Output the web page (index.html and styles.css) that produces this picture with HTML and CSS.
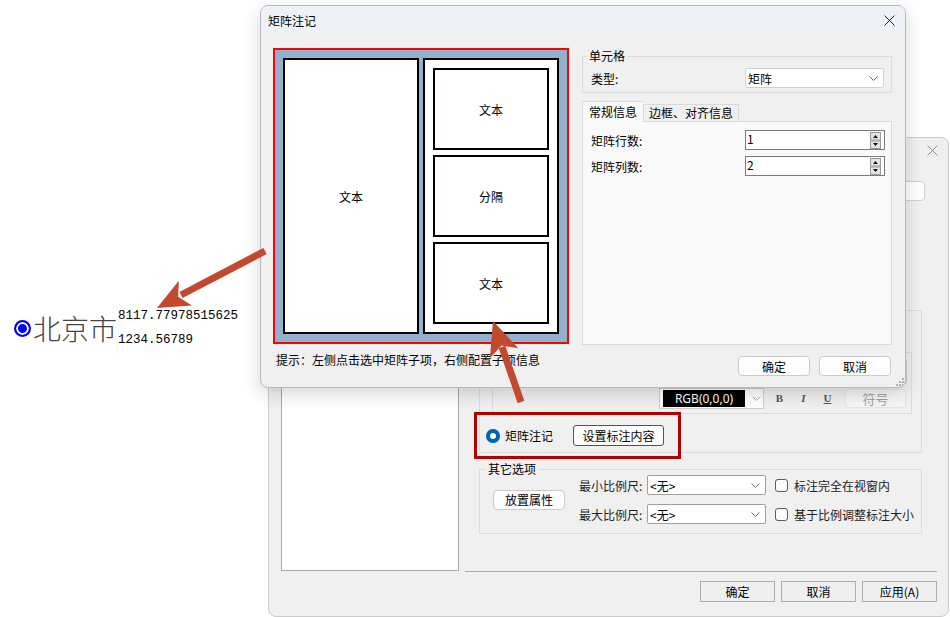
FILE: index.html
```html
<!DOCTYPE html>
<html lang="zh-CN">
<head>
  <meta charset="UTF-8" />
  <title>矩阵注记</title>
  <link rel="stylesheet" href="styles.css">
</head>
<body>
<div class="desk">

  <!-- 地图上的点标注 -->
  <div class="map-label">
    <span class="pin"></span>
    <span class="place">北京市</span>
    <span class="coords"><span>8117.77978515625</span><span>1234.56789</span></span>
  </div>

  <!-- 标注设置窗口（底层） -->
  <div class="dlg dlg-back">
    <div class="dlg-title">
      <span class="dlg-caption"></span>
      <svg class="close" viewBox="0 0 11 11"><path d="M0.5 0.5L10.5 10.5M10.5 0.5L0.5 10.5"/></svg>
    </div>
    <div class="back-body">
      <div class="listbox"></div>
      <div class="pane">
        <div class="name-row"><span class="edit"></span></div>
        <div class="pane-top"></div>

        <div class="box style-box">
          <div class="box text-box">
            <div class="memo"></div>
            <div class="toolbar">
              <span class="color-combo">
                <span class="swatch">RGB(0,0,0)</span>
                <svg class="chev" viewBox="0 0 9 5"><path d="M0.5 0.5L4.5 4.5L8.5 0.5"/></svg>
              </span>
              <span class="fmt fmt-b">B</span>
              <span class="fmt fmt-i">I</span>
              <span class="fmt fmt-u">U</span>
              <button class="btn btn-off" type="button">符号</button>
            </div>
          </div>
          <div class="radio-row">
            <span class="radio"></span>
            <span class="radio-text">矩阵注记</span>
            <button class="btn btn-accent" type="button">设置标注内容</button>
          </div>
        </div>

        <fieldset class="group other">
          <legend>其它选项</legend>
          <div class="other-row">
            <button class="btn place-btn" type="button">放置属性</button>
            <div class="other-grid">
              <span class="lbl">最小比例尺:</span>
              <span class="combo scale-combo">&lt;无&gt;<svg class="chev" viewBox="0 0 9 5"><path d="M0.5 0.5L4.5 4.5L8.5 0.5"/></svg></span>
              <span class="check"></span>
              <span class="lbl">标注完全在视窗内</span>
              <span class="lbl">最大比例尺:</span>
              <span class="combo scale-combo">&lt;无&gt;<svg class="chev" viewBox="0 0 9 5"><path d="M0.5 0.5L4.5 4.5L8.5 0.5"/></svg></span>
              <span class="check"></span>
              <span class="lbl">基于比例调整标注大小</span>
            </div>
          </div>
        </fieldset>

        <div class="sep"></div>
        <div class="foot">
          <button class="btn btn-flat" type="button">确定</button>
          <button class="btn btn-flat" type="button">取消</button>
          <button class="btn btn-flat" type="button">应用(A)</button>
        </div>
      </div>
    </div>
  </div>

  <!-- 矩阵注记窗口（前面） -->
  <div class="dlg dlg-front">
    <div class="dlg-title">
      <span class="dlg-caption">矩阵注记</span>
      <svg class="close" viewBox="0 0 11 11"><path d="M0.5 0.5L10.5 10.5M10.5 0.5L0.5 10.5"/></svg>
    </div>
    <div class="front-body">
      <div class="preview-col">
        <div class="matrix">
          <div class="cell cell-main">文本</div>
          <div class="stack">
            <div class="cell">文本</div>
            <div class="cell">分隔</div>
            <div class="cell">文本</div>
          </div>
        </div>
        <p class="hint">提示：左侧点击选中矩阵子项，右侧配置子项信息</p>
      </div>

      <div class="props">
        <fieldset class="group">
          <legend>单元格</legend>
          <div class="fld-row">
            <span>类型:</span>
            <span class="combo type-combo">矩阵<svg class="chev" viewBox="0 0 9 5"><path d="M0.5 0.5L4.5 4.5L8.5 0.5"/></svg></span>
          </div>
        </fieldset>

        <div class="tabs">
          <span class="tab active">常规信息</span>
          <span class="tab">边框、对齐信息</span>
        </div>
        <div class="tab-panel">
          <div class="spin-row">
            <span>矩阵行数:</span>
            <span class="spin"><span class="spin-val">1</span>
              <svg class="spin-btns" viewBox="0 0 11 17">
                <rect x="0.5" y="0.5" width="10" height="7.5" />
                <rect x="0.5" y="9" width="10" height="7.5" />
                <path class="tri" d="M3 6L5.5 3L8 6Z M3 11L5.5 14L8 11Z"/>
              </svg>
            </span>
          </div>
          <div class="spin-row">
            <span>矩阵列数:</span>
            <span class="spin"><span class="spin-val">2</span>
              <svg class="spin-btns" viewBox="0 0 11 17">
                <rect x="0.5" y="0.5" width="10" height="7.5" />
                <rect x="0.5" y="9" width="10" height="7.5" />
                <path class="tri" d="M3 6L5.5 3L8 6Z M3 11L5.5 14L8 11Z"/>
              </svg>
            </span>
          </div>
        </div>

        <div class="btn-row">
          <button class="btn" type="button">确定</button>
          <button class="btn" type="button">取消</button>
        </div>
      </div>
    </div>
    <svg class="grip" viewBox="0 0 8 8">
      <rect x="6" y="0" width="2" height="2"/>
      <rect x="3" y="3" width="2" height="2"/><rect x="6" y="3" width="2" height="2"/>
      <rect x="0" y="6" width="2" height="2"/><rect x="3" y="6" width="2" height="2"/><rect x="6" y="6" width="2" height="2"/>
    </svg>
  </div>

  <!-- 说明用的红框和箭头 -->
  <svg class="marks" viewBox="0 0 950 617">
    <rect class="mark-box" x="475.5" y="413.5" width="204" height="44"/>
    <path class="mark-line" d="M265 251L181 295"/>
    <polygon class="mark-head" points="157,308 178.8,280.7 178.2,296.8 191.8,305.5"/>
    <path class="mark-line" d="M521 402L502 347"/>
    <polygon class="mark-head" points="493,321 518.3,348.2 501.5,345.6 489.9,358"/>
  </svg>

</div>
</body>
</html>
```

FILE: styles.css
```css
* {
  box-sizing: border-box;
}

body {
  margin: 0;
  background: #fff;
  font-family: "Noto Sans CJK SC", "Microsoft YaHei", sans-serif;
  font-size: 12px;
  color: #000;
}

.desk {
  position: relative;
  width: 950px;
  height: 617px;
  overflow: hidden;
}

/* 点标注 */
.map-label {
  position: absolute;
  left: 14px;
  top: 304px;
  display: flex;
  align-items: center;
}

.pin {
  width: 17px;
  height: 17px;
  border-radius: 50%;
  border: 2px solid #0000ff;
  background: #0000ff;
  box-shadow: inset 0 0 0 2px #fff;
  margin-right: 2px;
}

.place {
  font-size: 28px;
  font-weight: 300;
  line-height: 48px;
  color: #444;
}

.coords {
  display: flex;
  flex-direction: column;
  margin-left: 1px;
  font-family: "Liberation Mono", monospace;
  font-size: 12.5px;
  line-height: 24px;
}

/* 窗口 */
.dlg {
  position: absolute;
  display: flex;
  flex-direction: column;
  background: #f0f0f0;
  border: 1px solid #c4c4c4;
  border-radius: 8px;
  overflow: hidden;
}

.dlg-back {
  left: 268px;
  top: 137px;
  width: 681px;
  height: 480px;
  border-color: #cbcbcb;
}

.dlg-front {
  left: 260px;
  top: 5px;
  width: 646px;
  height: 383px;
  border-color: #b6babf;
  box-shadow: 0 6px 18px rgba(0, 0, 0, 0.16);
  z-index: 2;
}

.dlg-title {
  flex: none;
  height: 29px;
  display: flex;
  align-items: center;
  justify-content: space-between;
  padding: 0 10px 0 7px;
}

.dlg-front .dlg-title {
  background: #eef2f7;
}

.close {
  width: 11px;
  height: 11px;
  fill: none;
  stroke: #1f1f1f;
  stroke-width: 1;
}

.dlg-back .close {
  stroke: #8c8c8c;
  margin-top: -5px;
}

.chev {
  width: 9px;
  height: 5px;
  fill: none;
  stroke: #6f6f6f;
  stroke-width: 1;
}

.btn {
  display: inline-flex;
  align-items: center;
  justify-content: center;
  height: 20px;
  padding: 0;
  font: inherit;
  color: #000;
  background: #fdfdfd;
  border: 1px solid #cbcbcb;
  border-radius: 4px;
}

.combo {
  display: flex;
  align-items: center;
  justify-content: space-between;
  height: 20px;
  background: #fff;
  border: 1px solid #d2d2d2;
  border-radius: 2px;
  padding: 0 5px 0 2px;
}

.group {
  margin: 0;
  padding: 0;
  min-width: 0;
  border: 1px solid #dcdcdc;
}

.group legend {
  padding: 0 2px;
  margin-left: 4px;
  line-height: 16px;
}

/* 矩阵注记窗口内容 */
.front-body {
  display: flex;
  gap: 13px;
  padding: 13px 0 0 12px;
}

.matrix {
  width: 296px;
  height: 296px;
  padding: 8px;
  display: flex;
  gap: 4px;
  border: 2px solid #ff0000;
  background: #93b1cf;
}

.cell {
  flex: 1;
  display: flex;
  align-items: center;
  justify-content: center;
  background: #fff;
  border: 2px solid #000;
}

.cell-main {
  flex: none;
  width: 136px;
}

.stack {
  flex: none;
  width: 136px;
  display: flex;
  flex-direction: column;
  gap: 5px;
  padding: 8px;
  background: #fff;
  border: 2px solid #000;
}

.hint {
  margin: 8px 0 0 3px;
  line-height: 16px;
}

.props {
  width: 310px;
  display: flex;
  flex-direction: column;
}

.fld-row {
  display: flex;
  align-items: center;
  justify-content: space-between;
  padding: 4px 7px 4px 8px;
}

.type-combo {
  width: 139px;
}

.tabs {
  display: flex;
  align-items: flex-end;
  height: 20px;
  margin-top: 8px;
}

.tab {
  height: 17px;
  padding: 0 5px;
  line-height: 16px;
  background: #f0f0f0;
  border: 1px solid #d9d9d9;
  border-bottom: none;
}

.tab.active {
  position: relative;
  z-index: 1;
  height: 21px;
  margin-bottom: -1px;
  padding: 0 6px;
  line-height: 19px;
  background: #f9f9f9;
  border-right: none;
}

.tab-panel {
  height: 224px;
  padding: 8px 6px 0 8px;
  display: flex;
  flex-direction: column;
  gap: 6px;
  background: #f9f9f9;
  border: 1px solid #d9d9d9;
}

.spin-row {
  display: flex;
  align-items: center;
  justify-content: space-between;
  height: 20px;
}

.spin {
  width: 140px;
  height: 20px;
  display: flex;
  align-items: center;
  justify-content: space-between;
  padding: 0 3px 0 1px;
  background: #fff;
  border: 1px solid #7a7a7a;
}

.spin-val {
  align-self: flex-start;
  line-height: 15px;
}

.spin-btns {
  width: 11px;
  height: 17px;
}

.spin-btns rect {
  fill: #e4e4e4;
  stroke: #9a9a9a;
  stroke-width: 1;
}

.spin-btns .tri {
  fill: #111;
}

.btn-row {
  display: flex;
  justify-content: flex-end;
  gap: 9px;
  margin-top: 11px;
  padding-right: 1px;
}

.btn-row .btn {
  width: 72px;
}

.grip {
  position: absolute;
  right: 1px;
  bottom: 1px;
  width: 8px;
  height: 8px;
  fill: #b0b0b0;
}

/* 标注设置窗口内容 */
.back-body {
  flex: 1;
  display: flex;
  gap: 6px;
  padding: 14px 11px 0 12px;
}

.listbox {
  width: 178px;
  height: 390px;
  background: #fff;
  border: 1px solid #a9a9a9;
}

.pane {
  width: 472px;
  display: flex;
  flex-direction: column;
}

.name-row {
  display: flex;
  justify-content: flex-end;
  height: 20px;
  padding-right: 12px;
}

.edit {
  width: 320px;
  background: #fff;
  border: 1px solid #cfcfcf;
  border-radius: 4px;
}

.pane-top {
  height: 101px;
  margin-top: 8px;
}

.box {
  border: 1px solid #dcdcdc;
}

.style-box {
  margin: 0 15px 0 14px;
  padding: 0 9px 6px 6px;
}

.text-box {
  margin: 41px 0 0 6px;
  padding: 7px 5px 6px 8px;
}

.memo {
  height: 25px;
  margin-right: -1px;
  background: #fff;
  border: 1px solid #cfcfcf;
  border-radius: 0 0 4px 4px;
}

.toolbar {
  display: flex;
  align-items: center;
  justify-content: flex-end;
  height: 18px;
  margin-top: 4px;
}

.color-combo {
  width: 105px;
  height: 21px;
  display: flex;
  align-items: center;
  gap: 7px;
  padding: 0 0 0 3px;
  background: #fff;
  border: 1px solid #cfcfcf;
}

.swatch {
  width: 82px;
  height: 17px;
  display: flex;
  align-items: center;
  justify-content: center;
  background: #000;
  color: #fff;
  font-family: "Noto Sans", sans-serif;
  font-size: 12px;
}

.color-combo .chev {
  stroke: #b0b0b0;
}

.fmt {
  width: 17px;
  margin-left: 7px;
  text-align: center;
  font-family: "Liberation Serif", serif;
  font-weight: bold;
  font-size: 11px;
  color: #555;
}

.fmt-i {
  font-style: italic;
}

.fmt-u {
  text-decoration: underline;
}

.btn-off {
  width: 61px;
  height: 19px;
  margin-left: 9px;
  color: #a3a3a3;
  background: #f6f6f6;
  border-color: #e6e6e6;
  font-size: 13px;
}

.radio-row {
  display: flex;
  align-items: center;
  height: 21px;
  margin-top: 11px;
}

.radio {
  width: 14px;
  height: 14px;
  border-radius: 50%;
  background: #0062b8;
  box-shadow: inset 0 0 0 4px #0062b8, inset 0 0 0 7px #fff;
}

.radio-text {
  margin-left: 5px;
}

.btn-accent {
  width: 91px;
  height: 21px;
  margin-left: 20px;
  border-color: #0067c0;
  border-radius: 3px;
}

.other {
  margin: 8px 15px 0 14px;
  padding: 0 0 9px 0;
}

.other legend {
  margin-left: 6px;
}

.other-row {
  display: flex;
  align-items: center;
  margin-top: -2px;
  padding-left: 13px;
}

.place-btn {
  width: 72px;
  margin-right: 14px;
}

.other-grid {
  display: grid;
  grid-template-columns: 68px 128px 19px auto;
  grid-auto-rows: 20px;
  row-gap: 9px;
  align-items: center;
}

.lbl {
  color: #222;
}

.scale-combo {
  width: 119px;
  border-color: #9e9e9e;
}

.check {
  width: 13px;
  height: 13px;
  background: #fbfbfb;
  border: 1px solid #5c5c5c;
  border-radius: 3px;
}

.sep {
  height: 1px;
  margin-top: 37px;
  background: #a9a9a9;
}

.foot {
  display: flex;
  justify-content: flex-end;
  gap: 6px;
  margin-top: 9px;
}

.btn-flat {
  width: 75px;
  height: 21px;
  border-radius: 0;
  background: #efefef;
  border-color: #adadad;
}

/* 红框与箭头 */
.marks {
  position: absolute;
  left: 0;
  top: 0;
  width: 950px;
  height: 617px;
  pointer-events: none;
  z-index: 5;
}

.mark-box {
  fill: none;
  stroke: #b30000;
  stroke-width: 3;
}

.mark-line {
  fill: none;
  stroke: #c0492f;
  stroke-width: 7;
}

.mark-head {
  fill: #c0492f;
}
```
